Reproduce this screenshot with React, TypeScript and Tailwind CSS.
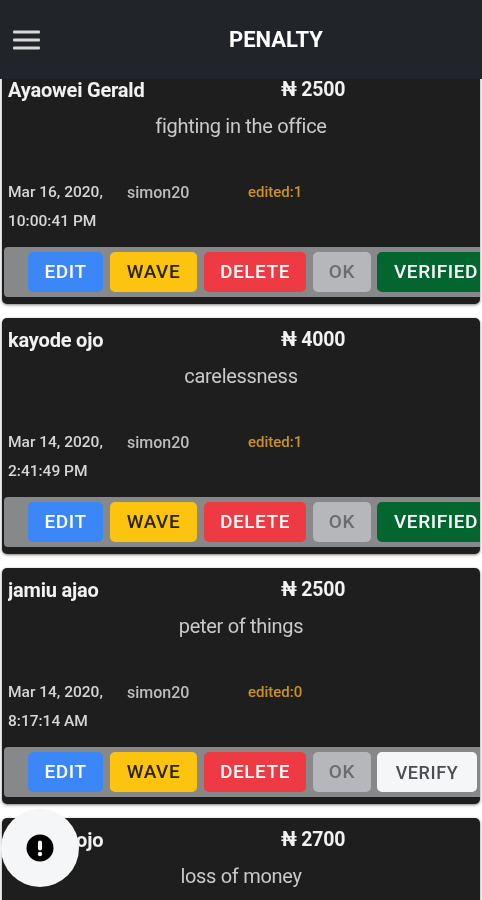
type Penalty = {
  name: string;
  amount: number;
  reason: string;
  date: string;
  time: string;
  user: string;
  edited: number;
  verified: boolean;
};

const penalties: Penalty[] = [
  { name: 'Ayaowei Gerald', amount: 2500, reason: 'fighting in the office', date: 'Mar 16, 2020,', time: '10:00:41 PM', user: 'simon20', edited: 1, verified: true },
  { name: 'kayode ojo', amount: 4000, reason: 'carelessness', date: 'Mar 14, 2020,', time: '2:41:49 PM', user: 'simon20', edited: 1, verified: true },
  { name: 'jamiu ajao', amount: 2500, reason: 'peter of things', date: 'Mar 14, 2020,', time: '8:17:14 AM', user: 'simon20', edited: 0, verified: false },
  { name: 'kayode ojo', amount: 2700, reason: 'loss of money', date: 'Mar 14, 2020,', time: '8:10:02 AM', user: 'simon20', edited: 0, verified: false },
];

function PenaltyCard({ penalty }: { penalty: Penalty }) {
  return (
    <div className="mx-[2px] mb-[14px] h-[236px] shrink-0 overflow-hidden rounded-[5px] bg-[#1e1e1e] shadow-[0_1px_3px_rgba(0,0,0,0.5)]">
      <div className="flex h-[44px] items-center pl-[6px] text-[20px] font-bold text-[#f1f1f1]">
        <span className="w-[273px] truncate tracking-[-0.2px]">{penalty.name}</span>
        <span className="text-[19.5px] tracking-[-0.2px]">₦ {penalty.amount}</span>
      </div>
      <p className="h-[28px] text-center text-[20px] leading-[28px] tracking-[-0.3px] text-[#c9c9c9]">
        {penalty.reason}
      </p>
      <div className="mt-[38px] flex h-[29px] items-center pl-[6px] text-[15.5px] font-medium text-[#d6d6d6]">
        <span className="w-[119px]">{penalty.date}</span>
        <span className="w-[121px] text-[16px] text-[#bdbdbd]">{penalty.user}</span>
        <span className="text-[15px] text-[#c9922e]">edited:{penalty.edited}</span>
      </div>
      <div className="flex h-[29px] items-center pl-[6px] text-[15.5px] font-medium text-[#d6d6d6]">
        {penalty.time}
      </div>
      <div className="mt-[11px] ml-[2px] flex h-[50px] w-[476px] items-center gap-[7px] overflow-hidden rounded-l-[4px] bg-[#87888a] pl-[24px] text-[19px] font-medium tracking-[0.6px]">
        <button className="h-[40px] w-[75px] shrink-0 rounded-[5px] bg-[#3c87f7] text-white">EDIT</button>
        <button className="h-[40px] w-[87px] shrink-0 rounded-[5px] bg-[#fcc40f] text-[#2a2200]">WAVE</button>
        <button className="h-[40px] w-[102px] shrink-0 rounded-[5px] bg-[#ee3b43] text-white">DELETE</button>
        <button className="h-[40px] w-[58px] shrink-0 rounded-[5px] bg-[#b6b7bb] text-[#6a6c70]">OK</button>
        {penalty.verified ? (
          <button className="-ml-[1px] h-[40px] w-[112px] shrink-0 rounded-[5px] bg-[#03662f] pl-[17px] text-left text-white">VERIFIED</button>
        ) : (
          <button className="-ml-[1px] h-[40px] w-[100px] shrink-0 rounded-[5px] bg-[#f5f6f8] text-[18px] text-[#4a4d52]">VERIFY</button>
        )}
      </div>
    </div>
  );
}

export default function App() {
  return (
    <div className="relative flex h-[900px] w-[482px] flex-col overflow-hidden bg-white font-['Roboto',sans-serif] blur-[0.6px]">
      <header className="relative z-10 flex h-[79px] shrink-0 items-center bg-[#212428]">
        <svg width="27" height="20" viewBox="0 0 27 20" className="ml-[13px] text-[#d8d8d8]">
          <rect x="0" y="0.5" width="27" height="3" rx="1" fill="currentColor" />
          <rect x="0" y="8.5" width="27" height="3" rx="1" fill="currentColor" />
          <rect x="0" y="16.5" width="27" height="3" rx="1" fill="currentColor" />
        </svg>
        <h1 className="ml-[189px] text-[22px] font-bold text-white">PENALTY</h1>
      </header>
      <main className="-mt-[11px] flex flex-col">
        {penalties.map((penalty, idx) => (
          <PenaltyCard key={idx} penalty={penalty} />
        ))}
      </main>
      <button className="absolute bottom-[13px] left-[1px] z-20 flex h-[78px] w-[78px] items-center justify-center rounded-full bg-[#f5f6f8]">
        <svg width="28" height="28" viewBox="0 0 28 28">
          <circle cx="14" cy="14" r="13.5" fill="#000" />
          <rect x="12" y="6.5" width="4" height="10" rx="2" fill="#f5f6f8" />
          <circle cx="14" cy="20" r="2.2" fill="#f5f6f8" />
        </svg>
      </button>
    </div>
  );
}
